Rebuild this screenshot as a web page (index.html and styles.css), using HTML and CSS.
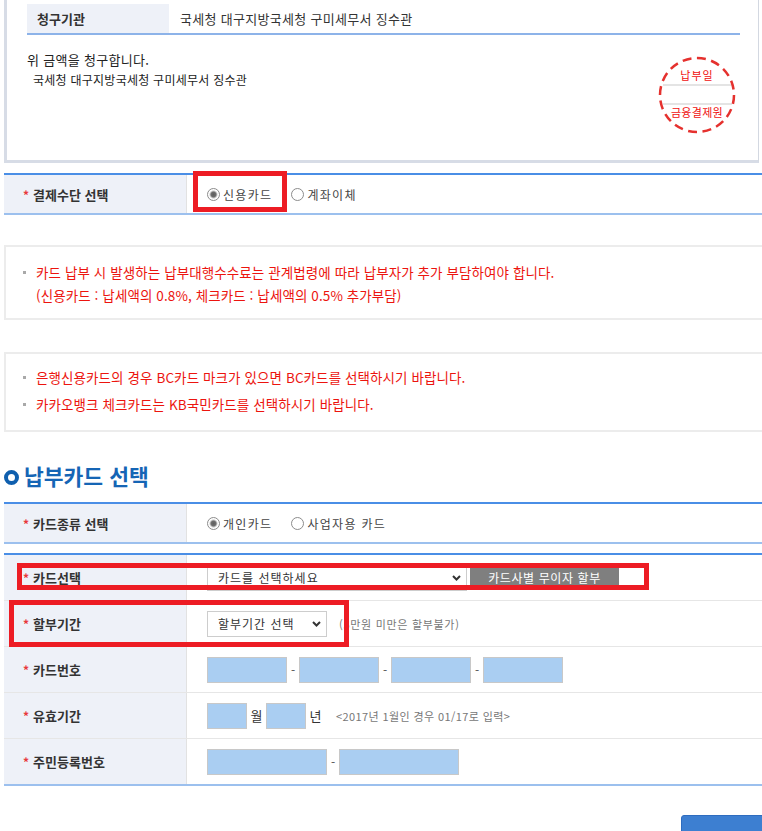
FILE: index.html
```html
<!DOCTYPE html>
<html lang="ko">
<head>
    <meta charset="UTF-8">
    <meta name="viewport" content="width=device-width, initial-scale=1.0">
    <title>납부카드 선택</title>
    <link rel="stylesheet" href="styles.css">
</head>
<body>

<div class="page">

    <div class="claim-box">
        <div class="claim-table">
            <div class="claim-head">청구기관</div>
            <div class="claim-value">국세청 대구지방국세청 구미세무서 징수관</div>
        </div>
        <div class="claim-body">
            <div class="claim-text">
                <p class="claim-lead">위 금액을 청구합니다.</p>
                <p class="claim-sign">국세청 대구지방국세청 구미세무서 징수관</p>
            </div>
            <div class="stamp">
                <svg class="stamp-ring" width="78" height="78" viewBox="0 0 78 78">
                    <circle cx="39" cy="39" r="37" fill="none" stroke="#e5312e" stroke-width="2.5" stroke-dasharray="9 5.5"/>
                </svg>
                <span class="stamp-top">납부일</span>
                <span class="stamp-field"></span>
                <span class="stamp-bottom">금융결제원</span>
            </div>
        </div>
    </div>

    <div class="form-table form-table--pay">
        <div class="form-row">
            <div class="form-label"><span class="req">*</span>결제수단 선택</div>
            <div class="form-field">
                <label class="choice"><input type="radio" class="radio" name="pay" checked>신용카드</label>
                <label class="choice"><input type="radio" class="radio" name="pay">계좌이체</label>
            </div>
        </div>
    </div>

    <div class="notice notice--fee">
        <ul>
            <li><span>카드 납부 시 발생하는 납부대행수수료는 관계법령에 따라 납부자가 추가 부담하여야 합니다.<br>(신용카드 : 납세액의 0.8%, 체크카드 : 납세액의 0.5% 추가부담)</span></li>
        </ul>
    </div>

    <div class="notice notice--bank">
        <ul>
            <li><span>은행신용카드의 경우 BC카드 마크가 있으면 BC카드를 선택하시기 바랍니다.</span></li>
            <li><span>카카오뱅크 체크카드는 KB국민카드를 선택하시기 바랍니다.</span></li>
        </ul>
    </div>

    <h2 class="section-title"><span class="ring"></span>납부카드 선택</h2>

    <div class="form-table form-table--pay">
        <div class="form-row">
            <div class="form-label"><span class="req">*</span>카드종류 선택</div>
            <div class="form-field">
                <label class="choice"><input type="radio" class="radio" name="kind" checked>개인카드</label>
                <label class="choice"><input type="radio" class="radio" name="kind">사업자용 카드</label>
            </div>
        </div>
    </div>

    <div class="form-table form-table--card">
        <div class="form-row">
            <div class="form-label"><span class="req">*</span>카드선택</div>
            <div class="form-field">
                <span class="select select--card">
                    <select>
                        <option>카드를 선택하세요</option>
                    </select>
                    <svg class="select-arrow" width="9" height="6" viewBox="0 0 9 6"><path d="M1 1 L4.5 4.5 L8 1" fill="none" stroke="#333" stroke-width="2"/></svg>
                </span>
                <button type="button" class="btn-gray">카드사별 무이자 할부</button>
            </div>
        </div>
        <div class="form-row">
            <div class="form-label"><span class="req">*</span>할부기간</div>
            <div class="form-field">
                <span class="select select--month">
                    <select>
                        <option>할부기간 선택</option>
                    </select>
                    <svg class="select-arrow" width="9" height="6" viewBox="0 0 9 6"><path d="M1 1 L4.5 4.5 L8 1" fill="none" stroke="#333" stroke-width="2"/></svg>
                </span>
                <span class="hint hint--gap">(5만원 미만은 할부불가)</span>
            </div>
        </div>
        <div class="form-row">
            <div class="form-label"><span class="req">*</span>카드번호</div>
            <div class="form-field">
                <input type="text" class="input input--card">
                <span class="dash">-</span>
                <input type="text" class="input input--card">
                <span class="dash">-</span>
                <input type="text" class="input input--card">
                <span class="dash">-</span>
                <input type="text" class="input input--card">
            </div>
        </div>
        <div class="form-row">
            <div class="form-label"><span class="req">*</span>유효기간</div>
            <div class="form-field">
                <input type="text" class="input input--short">
                <span class="unit">월</span>
                <input type="text" class="input input--short">
                <span class="unit">년</span>
                <span class="hint hint--date">&lt;2017년 1월인 경우 01/17로 입력&gt;</span>
            </div>
        </div>
        <div class="form-row">
            <div class="form-label"><span class="req">*</span>주민등록번호</div>
            <div class="form-field">
                <input type="text" class="input input--wide">
                <span class="dash">-</span>
                <input type="text" class="input input--wide">
            </div>
        </div>
    </div>

    <div class="actions">
        <button type="button" class="btn-submit">납부하기</button>
    </div>

    <!-- red annotation boxes drawn over the form -->
    <div class="mark mark--pay"></div>
    <div class="mark mark--card"></div>
    <div class="mark mark--month"></div>

</div>

</body>
</html>
```

FILE: styles.css
```css
html,
body {
    margin: 0;
    overflow: hidden;
    background: #fff;
}
body {
    font-family: "Noto Sans CJK KR", "Noto Sans", sans-serif;
    font-size: 12px;
    color: #333;
}
p {
    margin: 0;
}
.page {
    position: relative;
    padding-left: 4px;
    width: 770px;
}

/* claim box */
.claim-box {
    width: 755px;
    box-sizing: border-box;
    padding: 4px 18px 27px 20px;
    border-left: 3px solid #d7dce6;
    border-bottom: 3px solid #d7dce6;
    border-right: 1px solid #d3d8e1;
}
.claim-table {
    display: grid;
    grid-template-columns: 143px 1fr;
    height: 31px;
    box-sizing: border-box;
    border-bottom: 2px solid #8db3e9;
}
.claim-head {
    background-color: #eef1f8;
    border-right: 1px solid #fff;
    padding-left: 10px;
    font-weight: bold;
    font-size: 13px;
    line-height: 29px;
}
.claim-value {
    padding-left: 10px;
    font-size: 13px;
    letter-spacing: 0.3px;
    line-height: 29px;
}
.claim-body {
    display: flex;
    justify-content: space-between;
    align-items: flex-start;
    padding-top: 15px;
}
.claim-lead {
    font-size: 13px;
    letter-spacing: 0.3px;
    line-height: 20px;
    color: #222;
}
.claim-sign {
    padding-left: 6px;
    font-size: 12px;
    letter-spacing: 0.25px;
    line-height: 20px;
    color: #222;
}
.stamp {
    position: relative;
    width: 76px;
    height: 76px;
    margin: 7px 5px 0 0;
    display: flex;
    flex-direction: column;
    align-items: center;
    box-sizing: border-box;
    padding-top: 11px;
    color: #f01010;
    font-size: 11px;
    letter-spacing: 0.3px;
}
.stamp-ring {
    position: absolute;
    left: -1px;
    top: -1px;
}
.stamp-top,
.stamp-bottom {
    line-height: 14px;
    height: 14px;
}
.stamp-top {
    letter-spacing: 1px;
}
.stamp-field {
    width: 69px;
    height: 21px;
    margin-top: 2px;
    box-sizing: border-box;
    border-top: 2px solid #e4e4e4;
    border-bottom: 2px solid #e4e4e4;
}

/* form tables */
.form-table {
    border-top: 2px solid #4a8ee6;
    border-bottom: 2px solid #9cc0ee;
}
.form-table--pay {
    margin-top: 10px;
}
.form-table--card {
    margin-top: 9px;
}
.form-row {
    display: grid;
    grid-template-columns: 183px 1fr;
    height: 46px;
    box-sizing: border-box;
    border-bottom: 1px solid #e6e6e6;
}
.form-row:last-child {
    height: 45px;
    border-bottom: 0;
}
.form-table--pay .form-row {
    height: 38px;
}
.form-label {
    display: flex;
    align-items: center;
    padding-left: 19px;
    background-color: #eef1f8;
    border-right: 1px solid #e2e2e2;
    font-weight: bold;
    font-size: 13px;
    color: #333;
}
.req {
    color: #e8383b;
    margin-right: 4px;
    font-size: 12px;
}
.form-field {
    display: flex;
    align-items: center;
    padding-left: 20px;
}
.choice {
    display: inline-flex;
    align-items: center;
    margin-right: 19px;
    font-size: 12px;
    letter-spacing: 1.3px;
    color: #444;
}
.radio {
    appearance: none;
    -webkit-appearance: none;
    width: 13px;
    height: 13px;
    margin: 0 3px 0 0;
    border: 1px solid #8c8c8c;
    border-radius: 50%;
    background: #fff;
}
.radio:checked {
    background: radial-gradient(circle, #5e5e5e 0, #6e6e6e 2.5px, #c8c8c8 3.5px, #fff 4.5px);
}

/* notices */
.notice {
    border: 2px solid #ececec;
    border-right: 0;
    color: #ec140e;
    font-size: 13.5px;
    letter-spacing: 0.1px;
}
.notice ul {
    margin: 0;
    padding: 0;
    list-style: none;
}
.notice li {
    display: flex;
    gap: 10px;
    padding-left: 17px;
    line-height: 23px;
}
.notice li::before {
    content: '';
    flex: none;
    width: 3px;
    height: 3px;
    margin-top: 10px;
    background-color: #a9a9a9;
}
.notice--fee {
    margin-top: 30px;
    padding: 14px 0 11px;
}
.notice--bank {
    margin-top: 32px;
    padding: 12px 0 14px;
}
.notice--bank li + li {
    margin-top: 4px;
}

.section-title {
    display: flex;
    align-items: center;
    margin: 31px 0 13px;
    font-size: 21.5px;
    line-height: 26px;
    color: #1565b5;
    font-weight: bold;
}
.ring {
    width: 15px;
    height: 15px;
    box-sizing: border-box;
    border: 4px solid #0f5fae;
    border-radius: 50%;
    margin: 3px 5px 0 0;
}

/* controls */
.select {
    position: relative;
    display: inline-block;
}
.select select {
    appearance: none;
    -webkit-appearance: none;
    height: 26px;
    box-sizing: border-box;
    border: 1px solid #cdcdcd;
    background: #fff;
    padding: 0 0 0 10px;
    font-family: inherit;
    font-size: 12px;
    letter-spacing: 1px;
    color: #333;
    border-radius: 0;
}
.select--card select {
    width: 260px;
}
.select--month select {
    width: 120px;
}
.select-arrow {
    position: absolute;
    right: 6px;
    top: 10px;
    pointer-events: none;
}
.btn-gray {
    width: 149px;
    height: 25px;
    margin-left: 3px;
    border: none;
    background-color: #7f7f7f;
    color: #fff;
    font-family: inherit;
    font-size: 12px;
    letter-spacing: 0.6px;
    padding: 0;
}
.hint {
    font-size: 11px;
    color: #777;
    letter-spacing: 0.7px;
}
.hint--gap {
    margin-left: 12px;
}
.hint--date {
    margin-left: 11px;
    letter-spacing: 0.4px;
}
.input {
    height: 26px;
    box-sizing: border-box;
    border: 1px solid #c8c8c8;
    background-color: #aacef2;
    padding: 0;
    margin: 0;
}
.input--card {
    width: 80px;
}
.input--short {
    width: 40px;
}
.input--wide {
    width: 120px;
}
.dash {
    width: 12px;
    text-align: center;
    color: #555;
    font-size: 12px;
}
.unit {
    width: 19px;
    text-align: center;
    font-size: 13px;
    color: #333;
}

.actions {
    display: flex;
    justify-content: flex-end;
    margin-top: 29px;
}
.btn-submit {
    width: 93px;
    height: 44px;
    border: 1px solid #2e6cbf;
    border-radius: 3px 3px 0 0;
    background-color: #3d7fd1;
    color: #fff;
    font-family: inherit;
    font-size: 14px;
    font-weight: bold;
    padding: 12px 0 0;
    display: flex;
    justify-content: center;
    align-items: flex-start;
}

/* annotation marks */
.mark {
    position: absolute;
    box-sizing: border-box;
    border: 5px solid #ed1c24;
}
.mark--pay {
    left: 193px;
    top: 171px;
    width: 94px;
    height: 41px;
}
.mark--card {
    left: 17px;
    top: 563px;
    width: 632px;
    height: 27px;
}
.mark--month {
    left: 9px;
    top: 600px;
    width: 340px;
    height: 47px;
}
```
